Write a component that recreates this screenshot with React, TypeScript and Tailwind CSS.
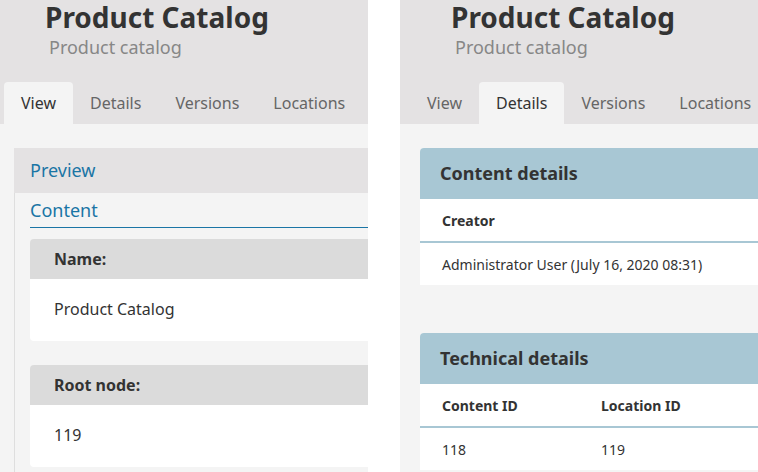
import React from 'react';

const font = { fontFamily: '"Noto Sans", "Open Sans", sans-serif' };

const tabs = ['View', 'Details', 'Versions', 'Locations'];

function Header({ active }: { active: string }) {
  return (
    <div className="bg-[#e4e2e3]">
      <div className="pl-[45px] h-[82px]">
        <h1 className="text-[28px] leading-[34px] font-bold text-[#333]">Product Catalog</h1>
        <p className="mt-[1px] pl-[4px] text-[18px] leading-[24px] text-[#878787]">Product catalog</p>
      </div>
      <div className="flex pl-[4px] h-[42px]">
        {tabs.map(t => (
          <div
            key={t}
            className={`px-[17px] h-[42px] leading-[42px] text-[16px] whitespace-nowrap rounded-t-[4px] ${t === active ? 'bg-[#f4f4f4] text-[#333]' : 'text-[#666]'}`}
          >
            {t}
          </div>
        ))}
      </div>
    </div>
  );
}

function FieldCard({ label, value }: { label: string; value: string }) {
  return (
    <div className="rounded-[4px] overflow-hidden">
      <div className="h-[40px] leading-[40px] bg-[#dbdbdb] px-6 text-[16px] font-bold text-[#333]">{label}</div>
      <div className="h-[62px] leading-[60px] bg-white px-6 text-[16px] text-[#333]">{value}</div>
    </div>
  );
}

function ViewPanel() {
  return (
    <div className="w-[368px] shrink-0 overflow-hidden h-full flex flex-col">
      <div className="w-[560px]">
        <Header active="View" />
      </div>
      <div className="flex-1 bg-[#f4f4f4] pt-6 pl-[14px] w-[560px]">
        <div className="h-[45px] leading-[45px] bg-[#e4e2e3] px-4 text-[18px] text-[#1a75a5]">Preview</div>
        <div className="border-l border-[#dedede] pl-[15px] h-full">
          <div className="h-[35px] leading-[35px] text-[18px] text-[#1a75a5] border-b border-[#1a75a5]">Content</div>
          <div className="pt-[11px] flex flex-col gap-6">
            <FieldCard label="Name:" value="Product Catalog" />
            <FieldCard label="Root node:" value="119" />
          </div>
        </div>
      </div>
    </div>
  );
}

function DetailsCard({ title, cols, values }: { title: string; cols: string[]; values: string[] }) {
  return (
    <div className="bg-white rounded-t-[4px] overflow-hidden">
      <div className="h-[51px] leading-[51px] bg-[#a8c7d4] px-5 text-[18px] font-bold text-[#333]">{title}</div>
      <div className="flex h-[44px] items-center border-b-2 border-[#a8c7d4] px-[22px] text-[14px] font-bold text-[#333]">
        {cols.map(c => (
          <div key={c} className="w-[159px] whitespace-nowrap">{c}</div>
        ))}
      </div>
      <div className="flex h-[42px] items-center px-[22px] text-[14px] text-[#333]">
        {values.map(v => (
          <div key={v} className="w-[159px] whitespace-nowrap">{v}</div>
        ))}
      </div>
    </div>
  );
}

function DetailsPanel() {
  return (
    <div className="flex-1 overflow-hidden h-full flex flex-col">
      <div className="w-[560px] bg-[#e4e2e3] pl-[6px]">
        <Header active="Details" />
      </div>
      <div className="flex-1 bg-[#f4f4f4] pt-6 pl-[20px] w-[560px] flex flex-col gap-12">
        <DetailsCard title="Content details" cols={['Creator']} values={['Administrator User (July 16, 2020 08:31)']} />
        <DetailsCard title="Technical details" cols={['Content ID', 'Location ID']} values={['118', '119']} />
      </div>
    </div>
  );
}

export default function App() {
  return (
    <div className="w-[758px] h-[472px] overflow-hidden bg-white flex gap-[32px]" style={font}>
      <ViewPanel />
      <DetailsPanel />
    </div>
  );
}
